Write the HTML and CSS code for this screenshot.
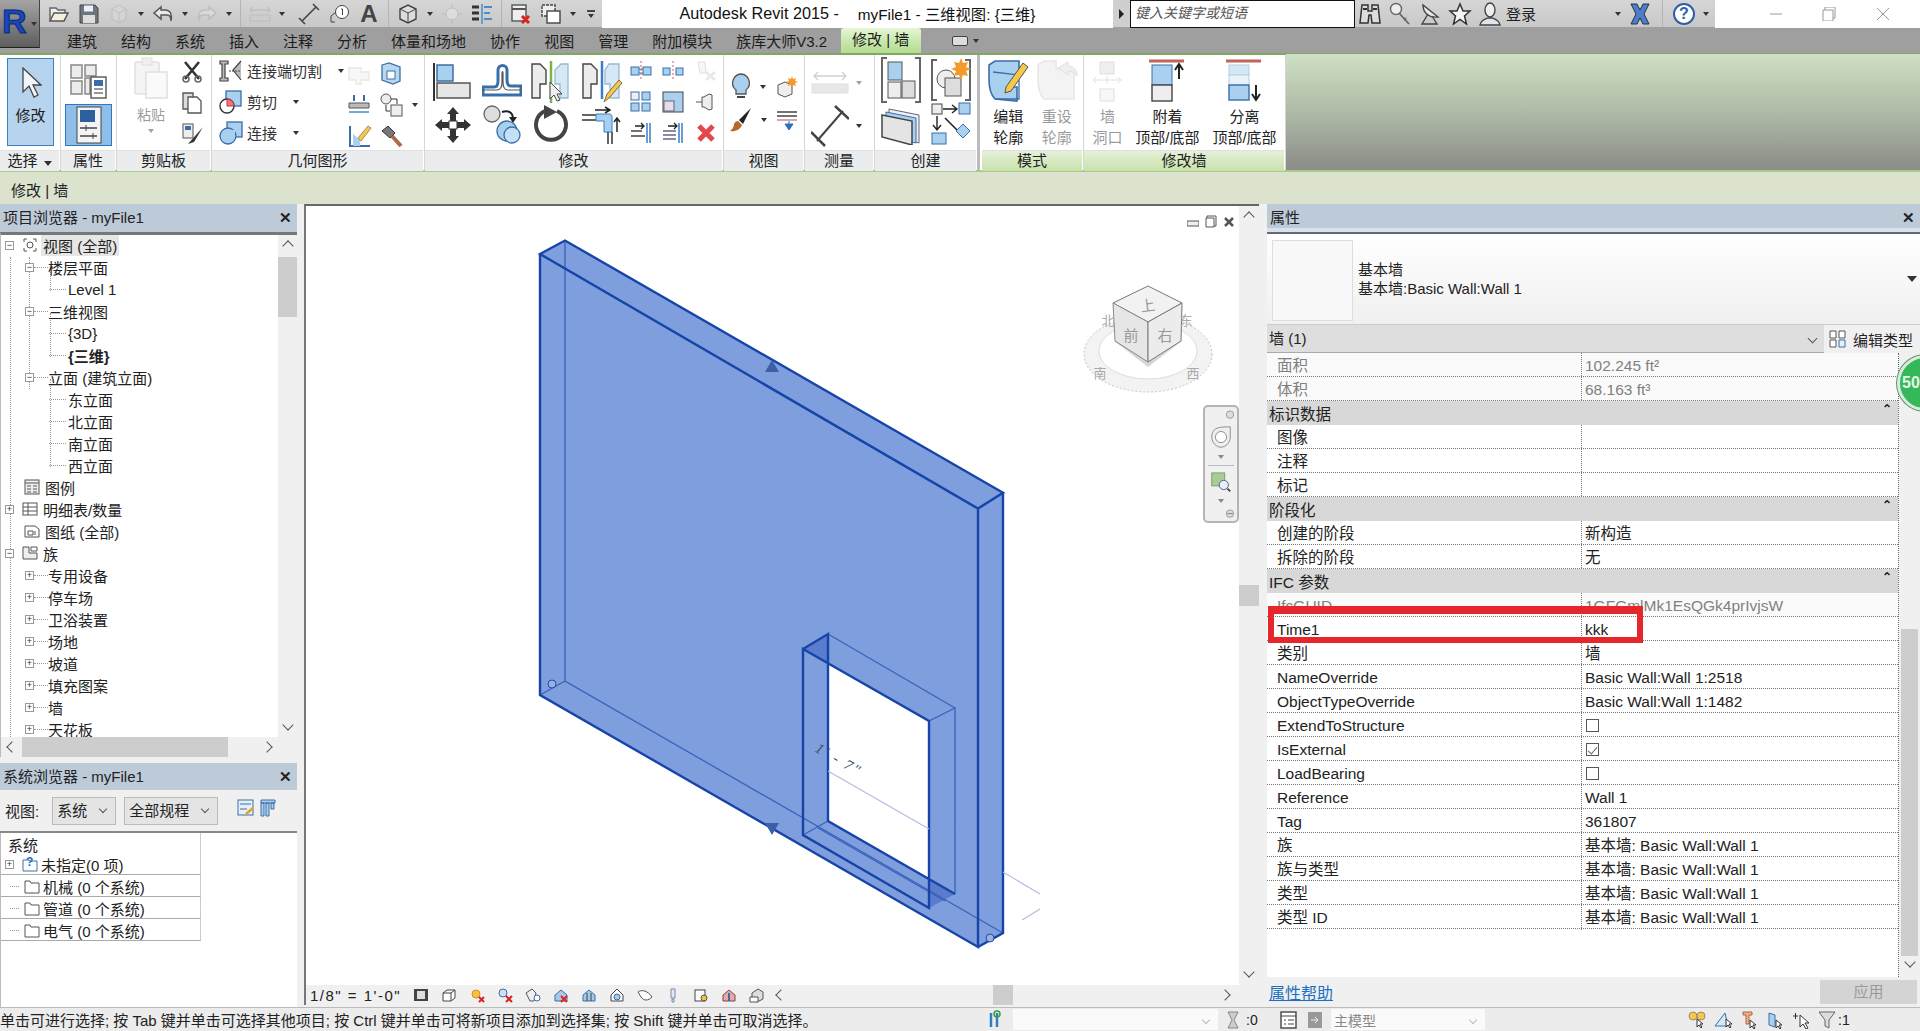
FILE: index.html
```html
<!DOCTYPE html>
<html lang="zh">
<head>
    <meta charset="UTF-8">
    <title>Autodesk Revit 2015 - myFile1</title>
    <link rel="stylesheet" href="styles.css">
</head>
<body>
    <!-- title bar -->
    <div class="titlebar">
        <div class="appbtn"><span class="applogo">R</span><i class="arr"></i></div>
        <div class="qat">
            <span class="s"><svg width="22" height="20" viewBox="0 0 22 20"><path d="M2 17V4h6l2 2h7v3" fill="#eee" stroke="#666" stroke-width="1.5"/><path d="M2 17l4-8h14l-4 8z" fill="#f4f0dd" stroke="#555" stroke-width="1.5"/></svg></span>
            <span class="s"><svg width="20" height="20" viewBox="0 0 20 20"><path d="M1 1h15l3 3v15H1z" fill="#6d7680" stroke="#444"/><rect x="5" y="1.5" width="9" height="6" fill="#eef"/><rect x="4" y="11" width="12" height="8" fill="#ddd"/></svg></span>
            <span class="s off"><svg width="22" height="22" viewBox="0 0 22 22"><path d="M4 6l7-4 7 4v10l-7 4-7-4z" fill="#ddd" stroke="#aaa"/><path d="M4 6l7 4 7-4M11 10v10" fill="none" stroke="#aaa"/></svg></span>
            <i class="a"><b class="arr"></b></i>
            <span class="s"><svg width="22" height="18" viewBox="0 0 22 18"><path d="M9 2L2 8l7 6v-4h6c3 0 4 2 4 6 1-6 0-11-6-11H9z" fill="#e8e8e8" stroke="#555" stroke-width="1.5"/></svg></span>
            <i class="a"><b class="arr"></b></i>
            <span class="s off"><svg width="22" height="18" viewBox="0 0 22 18"><path d="M13 2l7 6-7 6v-4H7c-3 0-4 2-4 6-1-6 0-11 6-11h4z" fill="#e8e8e8" stroke="#aaa" stroke-width="1.5"/></svg></span>
            <i class="a"><b class="arr"></b></i>
            <i class="qsep"></i>
            <span class="s off"><svg width="22" height="16" viewBox="0 0 22 16"><path d="M1 4h20M4 1L1 4l3 3M18 1l3 3-3 3" fill="none" stroke="#999"/><rect x="1" y="9" width="20" height="6" fill="#ccc" stroke="#aaa"/></svg></span>
            <i class="a"><b class="arr"></b></i>
            <span class="s sp"><svg width="22" height="22" viewBox="0 0 22 22"><path d="M4 18L18 4M1 15l6 6M15 1l6 6" fill="none" stroke="#444" stroke-width="1.6"/></svg></span>
            <span class="s"><svg width="22" height="20" viewBox="0 0 22 20"><circle cx="14" cy="8" r="6.5" fill="#fff" stroke="#444"/><path d="M13 5h1.5v6M3 12v6h4M3 12l5-4" fill="none" stroke="#444"/></svg></span>
            <span class="s qat-a">A</span>
            <i class="qsep"></i>
            <span class="s"><svg width="22" height="22" viewBox="0 0 22 22"><path d="M3 6l8-4 8 4v10l-8 4-8-4z" fill="#ddd" stroke="#444" stroke-width="1.4"/><path d="M3 6l8 4 8-4M11 10v10" fill="none" stroke="#444"/></svg></span>
            <i class="a"><b class="arr"></b></i>
            <span class="s off"><svg width="22" height="20" viewBox="0 0 22 20"><circle cx="11" cy="10" r="6" fill="#eee" stroke="#aaa"/><path d="M11 0v4M11 16v4M1 10h4M17 10h4" stroke="#aaa"/></svg></span>
            <span class="s"><svg width="22" height="20" viewBox="0 0 22 20"><path d="M1 3h7M1 9h7M1 15h7" stroke="#333" stroke-width="3"/><path d="M11 0v20" stroke="#4a8cc8" stroke-width="1.5"/><path d="M13 3h8M13 9h6M13 15h8" stroke="#4a8cc8" stroke-width="2"/></svg></span>
            <i class="qsep"></i>
            <span class="s"><svg width="22" height="22" viewBox="0 0 22 22"><rect x="2" y="2" width="14" height="16" fill="#eee" stroke="#555" stroke-width="1.4"/><path d="M2 6h14" stroke="#555" stroke-width="2"/><path d="M12 13l7 7M19 13l-7 7" stroke="#d22" stroke-width="3"/></svg></span>
            <span class="s"><svg width="22" height="22" viewBox="0 0 22 22"><rect x="2" y="2" width="13" height="11" fill="#eee" stroke="#444" stroke-width="1.4" stroke-dasharray="3 1"/><rect x="7" y="8" width="13" height="12" fill="#fff" stroke="#444" stroke-width="1.4"/></svg></span>
            <i class="a"><b class="arr"></b></i>
            <i class="a qat-more"><b class="bar"></b><b class="arr"></b></i>
        </div>
        <div class="apptitle"><span>Autodesk Revit 2015 -</span><span class="docname">myFile1 - 三维视图: {三维}</span></div>
        <div class="search-arrow"><i class="arr-r"></i></div>
        <div class="search">键入关键字或短语</div>
        <div class="qat qat-right">
            <span class="s"><svg width="24" height="24" viewBox="0 0 24 24"><path d="M4 3h6v6h4V3h6l2 18h-8l-1-8h-2l-1 8H2z" fill="#ddd" stroke="#333" stroke-width="1.5"/><path d="M5 7h4M15 7h4" stroke="#333" stroke-width="2"/></svg></span>
            <span class="s"><svg width="24" height="24" viewBox="0 0 24 24"><circle cx="8" cy="7" r="5.5" fill="#eee" stroke="#666" stroke-width="1.4"/><path d="M11 11l10 11M16 18l2-2" fill="none" stroke="#666" stroke-width="1.8"/></svg></span>
            <span class="s"><svg width="24" height="24" viewBox="0 0 24 24"><path d="M5 3c0 9 7 13 15 12L5 3z" fill="#e8e8e8" stroke="#444" stroke-width="1.4"/><path d="M10 12l-6 10h15l-5-8" fill="none" stroke="#444" stroke-width="1.4"/></svg></span>
            <span class="s"><svg width="24" height="24" viewBox="0 0 24 24"><path d="M12 2l3 7h7l-5.5 5 2 8-6.5-4.500L5.500 22l2-8L2 9h7z" fill="#f4f4f4" stroke="#333" stroke-width="1.5"/></svg></span>
            <span class="s"><svg width="24" height="24" viewBox="0 0 24 24"><ellipse cx="12" cy="8" rx="5" ry="7" fill="#eee" stroke="#444" stroke-width="1.4"/><path d="M2 23c1-5 5-6 8-7h4c3 1 7 2 8 7z" fill="#dde6ef" stroke="#444" stroke-width="1.4"/></svg></span>
            <span class="login">登录</span>
            <i class="a login-arr"><b class="arr"></b></i>
            <span class="s"><svg width="24" height="24" viewBox="0 0 24 24"><path d="M3 2h6l3 6 3-6h6l-5 10 5 10h-6l-3-6-3 6H3l5-10z" fill="#4f7cc8" stroke="#234" stroke-width="1"/></svg></span>
            <i class="qsep qsep-wide"></i>
            <span class="s"><svg width="24" height="24" viewBox="0 0 24 24"><circle cx="12" cy="12" r="10" fill="#fff" stroke="#2f5fa8" stroke-width="2"/></svg><em class="help">?</em></span>
            <i class="a"><b class="arr"></b></i>
        </div>
        <div class="winbtns">
            <svg width="14" height="14" viewBox="0 0 14 14"><path d="M1 7h12" stroke="#999"/></svg>
            <svg width="14" height="14" viewBox="0 0 14 14"><path d="M1 3h10v11H1zM3 3V0h10v11h-2" fill="none" stroke="#999"/></svg>
            <svg width="14" height="14" viewBox="0 0 14 14"><path d="M1 1l12 12M13 1L1 13" stroke="#999"/></svg>
        </div>
    </div>

    <!-- tabs -->
    <div class="tabs">
        <span>建筑</span><span>结构</span><span>系统</span><span>插入</span><span>注释</span><span>分析</span><span>体量和场地</span><span>协作</span><span>视图</span><span>管理</span><span>附加模块</span><span>族库大师V3.2</span>
        <span class="tab-active">修改 | 墙</span>
        <span class="tab-toggle"><b class="tt-box"></b><b class="arr"></b></span>
    </div>

    <!-- ribbon -->
    <div class="ribbon">
        <div class="panel p-select">
            <div class="pbody">
                <div class="modify-btn">
                    <svg width="22" height="32" viewBox="0 0 22 32"><path d="M3 1v24l6-6 5 11 4-2-5-10h8z" fill="#f2f6fa" stroke="#444" stroke-width="1.3"/></svg>
                    <span>修改</span>
                </div>
            </div>
            <div class="plabel">选择 <i class="arr"></i></div>
        </div>
        <div class="panel p-props">
            <div class="pbody col-center">
                <svg class="top-ic" width="40" height="38" viewBox="0 0 40 38"><path d="M2 4h11v13H2zM2 20h11v13H2zM16 4h11v11H16zM16 17h5v16h-5z" fill="#ececec" stroke="#888" stroke-width="1.5"/><rect x="22" y="16" width="15" height="21" fill="#fff" stroke="#555" stroke-width="1.4"/><rect x="25" y="19" width="9" height="6" fill="#3a6ea8"/><path d="M25 28h9M25 32h9" stroke="#777" stroke-width="1.5"/></svg>
                <div class="sel-btn"><svg width="26" height="38" viewBox="0 0 26 38"><rect x="1" y="1" width="24" height="36" fill="#f4f4f4" stroke="#444"/><rect x="4" y="4" width="15" height="12" fill="#2e5f9e"/><path d="M4 22h17M4 30h17" stroke="#444" stroke-width="1.5"/><path d="M10 19v6M17 27v6" stroke="#444"/></svg></div>
            </div>
            <div class="plabel">属性</div>
        </div>
        <div class="panel p-clip">
            <div class="pbody clip-body">
                <div class="big off">
                    <svg width="36" height="42" viewBox="0 0 36 42"><rect x="2" y="5" width="24" height="32" rx="2" fill="#e8e8e8" stroke="#bbb" stroke-width="1.5"/><rect x="9" y="1" width="10" height="7" fill="#ddd" stroke="#bbb"/><path d="M13 15h21v26H13z" fill="#f4f4f4" stroke="#bbb" stroke-width="1.5"/></svg>
                    <span>粘贴</span><i class="arr"></i>
                </div>
                <div class="small-col">
                    <svg width="20" height="22" viewBox="0 0 20 22"><path d="M3 1l14 17M17 1L3 18" stroke="#333" stroke-width="2.5"/><circle cx="4" cy="18" r="3" fill="none" stroke="#666" stroke-width="1.5"/><circle cx="16" cy="18" r="3" fill="none" stroke="#666" stroke-width="1.5"/></svg>
                    <svg width="20" height="22" viewBox="0 0 20 22"><path d="M1 1h10v16H1z" fill="#ddd" stroke="#555" stroke-width="1.3"/><path d="M6 5h9l4 4v12H6z" fill="#fff" stroke="#555" stroke-width="1.3"/></svg>
                    <svg width="22" height="22" viewBox="0 0 22 22"><rect x="1" y="1" width="10" height="14" fill="#eee" stroke="#555"/><rect x="3" y="3" width="6" height="4" fill="#3a6ea8"/><path d="M21 4L6 21l6-2z" fill="#333"/></svg>
                </div>
            </div>
            <div class="plabel">剪贴板</div>
        </div>
        <div class="panel p-geom">
            <div class="pbody geom-body">
                <div class="geom-rows">
                    <div class="grow"><svg width="24" height="22" viewBox="0 0 24 22"><path d="M1 1h8v3H6v14h3v3H1v-3h2V4H1zM22 1l-8 9 8 10" fill="#bbb" stroke="#444" stroke-width="1.2"/><path d="M10 11h12" stroke="#444" stroke-width="1.2" stroke-dasharray="2 1"/></svg><span>连接端切割</span><i class="arr"></i></div>
                    <div class="grow"><svg width="24" height="24" viewBox="0 0 24 24"><rect x="7" y="1" width="15" height="15" fill="#a9d0ee" stroke="#3b6ea8" stroke-width="1.3"/><circle cx="8" cy="16" r="7" fill="#fff" stroke="#333" stroke-width="1.4"/><path d="M8 9a7 7 0 0 1 7 7H8z" fill="#e78" stroke="#c33"/></svg><span>剪切</span><i class="arr"></i></div>
                    <div class="grow"><svg width="24" height="24" viewBox="0 0 24 24"><rect x="8" y="1" width="15" height="15" fill="#a9d0ee" stroke="#3b6ea8" stroke-width="1.3"/><circle cx="9" cy="15" r="8" fill="#a9d0ee" stroke="#3b6ea8" stroke-width="1.3"/><path d="M9 9h7v7H9z" fill="#a9d0ee"/></svg><span>连接</span><i class="arr"></i></div>
                </div>
                <div class="geom-icons">
                    <svg class="off" width="22" height="22" viewBox="0 0 22 22"><path d="M1 5h12v4h8v8h-8v4H8v-4H1z" fill="#eee" stroke="#ccc" stroke-width="1.3"/></svg>
                    <svg width="22" height="24" viewBox="0 0 22 24"><path d="M2 3l7-2 11 4v14l-7 3-11-4z" fill="#b8d8f0" stroke="#3b6ea8" stroke-width="1.3"/><rect x="7" y="9" width="8" height="8" fill="#fff" stroke="#3b6ea8"/></svg>
                    <svg width="22" height="22" viewBox="0 0 22 22"><path d="M1 9h20v5H1z" fill="#bbb" stroke="#555"/><path d="M1 18h20" stroke="#4a8cc8" stroke-width="1.5"/><path d="M6 1v6M16 1v6" stroke="#3b6ea8" stroke-width="2"/></svg>
                    <span class="with-arr"><svg width="24" height="24" viewBox="0 0 24 24"><circle cx="6" cy="6" r="5" fill="#eee" stroke="#555"/><rect x="11" y="12" width="11" height="11" fill="#eee" stroke="#555"/><path d="M11 6h6v5M6 12v6h4" fill="none" stroke="#333"/></svg><i class="arr"></i></span>
                    <svg width="24" height="24" viewBox="0 0 24 24"><path d="M2 2v20h20" fill="none" stroke="#3b6ea8" stroke-width="2"/><path d="M5 22V10l7 6V22z" fill="#a9d0ee"/><path d="M10 14L20 2l3 2-10 13z" fill="#f4c84a" stroke="#a86"/></svg>
                    <svg width="24" height="24" viewBox="0 0 24 24"><path d="M2 7l6-5 7 7-5 5z" fill="#777" stroke="#333"/><path d="M12 12l9 10" stroke="#b06a4a" stroke-width="4"/></svg>
                </div>
            </div>
            <div class="plabel">几何图形</div>
        </div>
        <div class="panel p-modify">
            <div class="pbody modify-body">
                <div class="large-grid">
                    <svg width="40" height="40" viewBox="0 0 40 40"><path d="M1 1v38" stroke="#333" stroke-width="2"/><rect x="4" y="3" width="16" height="16" fill="#a9d0ee" stroke="#3b6ea8" stroke-width="1.5"/><rect x="4" y="21" width="33" height="15" fill="#e6e6e6" stroke="#555" stroke-width="1.5"/></svg>
                    <svg width="40" height="38" viewBox="0 0 40 38"><path d="M1 32V24h11c3 0 4-2 4-6V7c0-6 9-6 9 0v10c0 4 1 6 4 6h10v9z" fill="#fff" stroke="#3b6ea8" stroke-width="3"/><path d="M1 27h14c4 0 5-3 5-8v-9c0-2 1-2 1 0v9c0 5 1 8 5 8h13" fill="none" stroke="#555" stroke-width="1.2"/></svg>
                    <svg width="40" height="42" viewBox="0 0 40 42"><path d="M1 3h8l6 6v14H9v14H1z" fill="#ececec" stroke="#444" stroke-width="1.4"/><path d="M20 0v42" stroke="#7fb24a" stroke-width="2.5"/><path d="M37 3h-7l-6 6v14h5v14h8z" fill="#d5e8f6" stroke="#9bc" stroke-width="1.3"/><path d="M19 21v17l4-4 3 6 3-1-3-6h5z" fill="#eee" stroke="#444"/></svg>
                    <svg width="40" height="42" viewBox="0 0 40 42"><path d="M1 3h8l6 6v14H9v14H1z" fill="#ececec" stroke="#444" stroke-width="1.4"/><path d="M20 0v38" stroke="#3b7fc8" stroke-width="2.5"/><path d="M37 3h-10l-4 6v14h5v14h9z" fill="#d5e8f6" stroke="#9bc" stroke-width="1.3"/><path d="M22 41l3-8 12-14 3 3-12 14z" fill="#f4c84a" stroke="#864"/></svg>
                    <svg width="38" height="38" viewBox="0 0 38 38"><path d="M19 1l6 7h-3v8h8v-3l7 6-7 6v-3h-8v8h3l-6 7-6-7h3v-8H8v3l-7-6 7-6v3h8V8h-3z" fill="#333"/><rect x="15" y="15" width="8" height="8" fill="#fff" stroke="#333"/></svg>
                    <svg width="38" height="40" viewBox="0 0 38 40"><circle cx="9" cy="9" r="8" fill="#ddd" stroke="#666" stroke-width="1.3"/><path d="M19 7c6-2 11 0 11 7" fill="none" stroke="#222" stroke-width="2"/><path d="M26 12h8l-4 6z" fill="#222"/><circle cx="24" cy="26" r="10" fill="#a9d0ee" stroke="#3b6ea8" stroke-width="1.3"/><circle cx="29" cy="30" r="8" fill="#c4e0f4" stroke="#3b6ea8" stroke-width="1.3"/></svg>
                    <svg width="38" height="40" viewBox="0 0 38 40"><path d="M13 6a15 15 0 1 0 12 0" fill="none" stroke="#444" stroke-width="4"/><path d="M12 0l13 7-13 7z" fill="#444"/></svg>
                    <svg width="42" height="38" viewBox="0 0 42 38"><path d="M1 9h14M1 14h14" stroke="#333" stroke-width="1.5"/><path d="M14 4h14M24 1l5 3-5 3" fill="none" stroke="#222" stroke-width="1.5"/><path d="M15 8h13c2 0 3 1 3 3v15h-8V15h-8z" fill="#a9d0ee" stroke="#3b7fc8"/><path d="M27 26v12M31 26v12" stroke="#333" stroke-width="1.5"/><path d="M36 26V12M33 16l3-4 3 4" fill="none" stroke="#222" stroke-width="1.5"/></svg>
                </div>
                <div class="small-grid">
                    <svg width="22" height="22" viewBox="0 0 22 22"><rect x="1" y="7" width="8" height="8" fill="#a9d0ee" stroke="#3b6ea8"/><rect x="13" y="7" width="8" height="8" fill="#a9d0ee" stroke="#3b6ea8"/><path d="M9 9h4M9 13h4" stroke="#3b6ea8"/><path d="M11 1v20" stroke="#d55" stroke-dasharray="2 2"/></svg>
                    <svg width="22" height="22" viewBox="0 0 22 22"><rect x="1" y="8" width="7" height="7" fill="#a9d0ee" stroke="#3b6ea8"/><rect x="14" y="8" width="7" height="7" fill="#a9d0ee" stroke="#3b6ea8"/><path d="M11 1v20" stroke="#d55" stroke-dasharray="2 2"/></svg>
                    <svg class="off" width="22" height="22" viewBox="0 0 22 22"><path d="M3 2h7l1 11H5z" fill="#eee" stroke="#bbb"/><path d="M11 12l9 8M20 12l-9 8" stroke="#ccc" stroke-width="2.5"/></svg>
                    <svg width="22" height="22" viewBox="0 0 22 22"><rect x="1" y="1" width="8" height="8" fill="#eee" stroke="#3b6ea8"/><rect x="12" y="1" width="8" height="8" fill="#a9d0ee" stroke="#3b6ea8"/><rect x="1" y="12" width="8" height="8" fill="#a9d0ee" stroke="#3b6ea8"/><rect x="12" y="12" width="8" height="8" fill="#a9d0ee" stroke="#3b6ea8"/></svg>
                    <svg width="22" height="22" viewBox="0 0 22 22"><rect x="1" y="1" width="20" height="20" fill="#a9d0ee" stroke="#444"/><rect x="2" y="10" width="10" height="10" fill="#e6dcef" stroke="#666"/></svg>
                    <svg width="22" height="22" viewBox="0 0 22 22"><path d="M1 11h6M7 6h2l5-3 3 1v14l-3 1-5-3H7z" fill="#eee" stroke="#555"/></svg>
                    <svg width="22" height="22" viewBox="0 0 22 22"><path d="M1 9h11M1 14h14" stroke="#444" stroke-width="1.5"/><path d="M5 4h9M11 1l3 3-3 3" fill="none" stroke="#222" stroke-width="1.3"/><path d="M17 1v20M20 1v20" stroke="#3b7fc8" stroke-width="1.5"/></svg>
                    <svg width="22" height="22" viewBox="0 0 22 22"><path d="M1 9h13M1 13h13M1 17h13" stroke="#668" stroke-width="1.5"/><path d="M6 4h9M12 1l3 3-3 3" fill="none" stroke="#222" stroke-width="1.3"/><path d="M17 1v20M20 1v20" stroke="#3b7fc8" stroke-width="1.5"/></svg>
                    <svg width="22" height="22" viewBox="0 0 22 22"><path d="M4 4l14 14M18 4L4 18" stroke="#e4474a" stroke-width="5"/></svg>
                </div>
            </div>
            <div class="plabel">修改</div>
        </div>
        <div class="panel p-view">
            <div class="pbody two-grid">
                <span class="with-arr"><svg width="22" height="28" viewBox="0 0 22 28"><path d="M11 1a9 9 0 0 1 5 16v4H6v-4a9 9 0 0 1 5-16z" fill="#a9d0ee" stroke="#555" stroke-width="1.3"/><path d="M7 24h8" stroke="#444" stroke-width="2"/></svg><i class="arr"></i></span>
                <svg width="22" height="24" viewBox="0 0 22 24"><path d="M2 10l7-3 7 3v9l-7 3-7-3z" fill="#eee" stroke="#555"/><path d="M16 1l1 3 3-1-1 3 3 1-3 1 1 3-3-1-1 3-1-3-3 1 1-3-3-1 3-1-1-3 3 1z" fill="#f39a2a"/></svg>
                <span class="with-arr"><svg width="24" height="26" viewBox="0 0 24 26"><path d="M22 1L10 13l4 4z" fill="#222"/><path d="M9 14l4 4c-2 5-7 7-12 6 3-2 4-5 4-7 1-2 2-3 4-3z" fill="#b26a2f"/></svg><i class="arr"></i></span>
                <svg width="22" height="22" viewBox="0 0 22 22"><path d="M1 3h20M1 7h20" stroke="#444" stroke-width="1.5"/><path d="M1 11h20" stroke="#a55"/><path d="M13 12v6M9 15l4 6 4-6z" fill="#2f6fc0" stroke="#2f6fc0"/></svg>
            </div>
            <div class="plabel">视图</div>
        </div>
        <div class="panel p-measure">
            <div class="pbody measure-body">
                <span class="with-arr off"><svg width="38" height="26" viewBox="0 0 38 26"><path d="M3 6h32M7 2L3 6l4 4M31 2l4 4-4 4" fill="none" stroke="#999" stroke-width="1.3"/><rect x="1" y="14" width="36" height="9" fill="#ccc" stroke="#bbb"/></svg><i class="arr"></i></span>
                <span class="with-arr"><svg width="38" height="42" viewBox="0 0 38 42"><path d="M6 36L32 6" stroke="#444" stroke-width="2"/><path d="M0 27l14 14M24 1l14 13" stroke="#444" stroke-width="2.5"/></svg><i class="arr"></i></span>
            </div>
            <div class="plabel">测量</div>
        </div>
        <div class="panel p-create">
            <div class="pbody two-grid create-grid">
                <svg width="40" height="46" viewBox="0 0 40 46"><path d="M6 1H1v44h5M34 1h5v44h-5" fill="none" stroke="#666" stroke-width="2"/><rect x="7" y="5" width="14" height="18" fill="#a9d0ee" stroke="#555"/><rect x="7" y="25" width="13" height="16" fill="#eee" stroke="#555"/><rect x="21" y="24" width="13" height="17" fill="#ddd" stroke="#555"/></svg>
                <svg width="40" height="46" viewBox="0 0 40 46"><path d="M6 3H1v40h5M34 3h5v40h-5" fill="none" stroke="#666" stroke-width="2"/><circle cx="15" cy="22" r="9" fill="#eee" stroke="#555"/><rect x="14" y="21" width="16" height="18" fill="#ddd" stroke="#555"/><path d="M30 1l2 5 5-1-2 5 5 2-5 2 2 5-5-1-2 5-2-5-5 1 2-5-5-2 5-2-2-5 5 1z" fill="#f39a2a"/></svg>
                <svg width="40" height="44" viewBox="0 0 40 44"><path d="M8 8l30 6v28L8 34z" fill="#eef" stroke="#666"/><path d="M5 11l30 6v25L5 36z" fill="#a9d0ee" stroke="#3b6ea8"/><path d="M1 14l30 6v24L1 36z" fill="#e4e4e4" stroke="#444" stroke-width="1.5"/></svg>
                <svg width="40" height="44" viewBox="0 0 40 44"><rect x="1" y="3" width="10" height="10" fill="#eee" stroke="#444"/><path d="M12 8h13M21 4l5 4-5 4" fill="none" stroke="#222" stroke-width="1.4"/><rect x="28" y="2" width="11" height="11" fill="#a9d0ee" stroke="#3b6ea8"/><path d="M6 15v13M2 24l4 5 4-5" fill="none" stroke="#222" stroke-width="1.4"/><path d="M14 17l12 12" stroke="#222" stroke-width="1.6"/><rect x="1" y="32" width="14" height="11" fill="#a9d0ee" stroke="#3b6ea8"/><path d="M32 23l7 7-7 7-7-7z" fill="#a9d0ee" stroke="#3b6ea8"/></svg>
            </div>
            <div class="plabel">创建</div>
        </div>
        <div class="panel p-mode green">
            <div class="pbody tool-row">
                <div class="tool">
                    <svg width="42" height="44" viewBox="0 0 42 44"><path d="M2 6l6-4h24v10L22 28l8 0v14L8 40C4 36 2 30 2 20z" fill="#a9d0ee" stroke="#3b6ea8" stroke-width="1.6"/><path d="M6 13l26 3v24H8" fill="none" stroke="#3b6ea8" stroke-width="1.3"/><path d="M19 28l-1 6 6-2 17-24-5-4z" fill="#f4c84a" stroke="#555"/></svg>
                    <span>编辑<br>轮廓</span>
                </div>
                <div class="tool off">
                    <svg width="42" height="44" viewBox="0 0 42 44"><path d="M2 6l6-4h12v8h18v30H8C4 36 2 30 2 20z" fill="#e6e6e6" stroke="#ccc" stroke-width="1.6"/><path d="M22 9l10-6v4c6 0 9 4 9 10-2-3-5-5-9-5v4z" fill="#ddd" stroke="#bbb"/></svg>
                    <span>重设<br>轮廓</span>
                </div>
            </div>
            <div class="plabel">模式</div>
        </div>
        <div class="panel p-wallmod green">
            <div class="pbody tool-row">
                <div class="tool off">
                    <svg width="30" height="44" viewBox="0 0 30 44"><rect x="8" y="3" width="14" height="12" fill="#ddd" stroke="#bbb"/><rect x="8" y="30" width="14" height="12" fill="#eee" stroke="#bbb"/><path d="M1 21h28M15 17v8M4 18l-3 3 3 3M26 18l3 3-3 3" fill="none" stroke="#bbb"/></svg>
                    <span>墙<br>洞口</span>
                </div>
                <div class="tool">
                    <svg width="36" height="44" viewBox="0 0 36 44"><path d="M0 2h35" stroke="#c0655a" stroke-width="3"/><rect x="3" y="6" width="20" height="20" fill="#a9d0ee" stroke="#3b6ea8"/><rect x="3" y="26" width="20" height="16" fill="#eee" stroke="#444" stroke-width="1.4"/><path d="M30 20V6M26 11l4-6 4 6" fill="none" stroke="#222" stroke-width="2"/></svg>
                    <span>附着<br>顶部/底部</span>
                </div>
                <div class="tool">
                    <svg width="36" height="44" viewBox="0 0 36 44"><path d="M0 2h35" stroke="#c0655a" stroke-width="3"/><rect x="3" y="6" width="20" height="10" fill="#d5e8f6" stroke="#bcd"/><rect x="3" y="16" width="20" height="10" fill="#e8f2fa" stroke="#bcd"/><rect x="3" y="26" width="20" height="15" fill="#a9d0ee" stroke="#3b6ea8" stroke-width="1.4"/><path d="M30 26v14M26 35l4 6 4-6" fill="none" stroke="#222" stroke-width="2"/></svg>
                    <span>分离<br>顶部/底部</span>
                </div>
            </div>
            <div class="plabel">修改墙</div>
        </div>
        <div class="ribbon-fill"></div>
    </div>

    <div class="contextbar">修改 | 墙</div>

    <div class="main">
        <!-- left column -->
        <div class="leftcol">
            <div class="dockhead">项目浏览器 - myFile1<b class="x">✕</b></div>
            <div class="browser">
                <div class="browser-inner">
                    <div class="tree">
                        <i class="guide g0"></i><i class="guide g1"></i><i class="guide g2"></i><i class="guide g3"></i><i class="guide g4"></i>
                        <div class="node d0"><i class="exp">−</i><svg class="nic" width="16" height="16" viewBox="0 0 16 16"><path d="M5 2H2v3M11 2h3v3M5 14H2v-3M11 14h3v-3" fill="none" stroke="#555"/><circle cx="8" cy="8" r="3" fill="none" stroke="#555"/></svg><span class="sel">视图 (全部)</span></div>
                        <div class="node d1"><i class="exp">−</i><i class="stub"></i>楼层平面</div>
                        <div class="node d2"><i class="stub"></i>Level 1</div>
                        <div class="node d1"><i class="exp">−</i><i class="stub"></i>三维视图</div>
                        <div class="node d2"><i class="stub"></i>{3D}</div>
                        <div class="node d2 bold"><i class="stub"></i>{三维}</div>
                        <div class="node d1"><i class="exp">−</i><i class="stub"></i>立面 (建筑立面)</div>
                        <div class="node d2"><i class="stub"></i>东立面</div>
                        <div class="node d2"><i class="stub"></i>北立面</div>
                        <div class="node d2"><i class="stub"></i>南立面</div>
                        <div class="node d2"><i class="stub"></i>西立面</div>
                        <div class="node d0 noexp"><svg class="nic" width="16" height="16" viewBox="0 0 16 16"><rect x="1" y="1" width="14" height="14" fill="#eee" stroke="#555"/><path d="M1 4h14M3 7h4M9 7h4M3 10h4M9 10h4M3 13h4M9 13h4" stroke="#555"/></svg>图例</div>
                        <div class="node d0"><i class="exp">+</i><svg class="nic" width="16" height="16" viewBox="0 0 16 16"><rect x="1" y="2" width="14" height="12" fill="#fff" stroke="#555"/><path d="M1 6h14M1 10h14M6 2v12" stroke="#555"/></svg>明细表/数量</div>
                        <div class="node d0 noexp"><svg class="nic" width="16" height="16" viewBox="0 0 16 16"><path d="M1 3h10l4 3v8H1z" fill="#fff" stroke="#555"/><path d="M4 8h5v4H4zM11 8v4" fill="none" stroke="#555"/></svg>图纸 (全部)</div>
                        <div class="node d0"><i class="exp">−</i><svg class="nic" width="16" height="16" viewBox="0 0 16 16"><path d="M1 2h6v6h8v6H1z" fill="#eee" stroke="#555"/><path d="M9 2h6v4H9z" fill="#fff" stroke="#555"/></svg>族</div>
                        <div class="node d1"><i class="exp">+</i><i class="stub"></i>专用设备</div>
                        <div class="node d1"><i class="exp">+</i><i class="stub"></i>停车场</div>
                        <div class="node d1"><i class="exp">+</i><i class="stub"></i>卫浴装置</div>
                        <div class="node d1"><i class="exp">+</i><i class="stub"></i>场地</div>
                        <div class="node d1"><i class="exp">+</i><i class="stub"></i>坡道</div>
                        <div class="node d1"><i class="exp">+</i><i class="stub"></i>填充图案</div>
                        <div class="node d1"><i class="exp">+</i><i class="stub"></i>墙</div>
                        <div class="node d1"><i class="exp">+</i><i class="stub"></i>天花板</div>
                    </div>
                    <div class="vscroll tree-scroll"><i class="ch up"></i><b class="thumb"></b><i class="ch down"></i></div>
                </div>
                <div class="hscroll"><i class="ch left"></i><b class="thumb"></b><i class="ch right"></i></div>
            </div>
            <div class="dockhead second">系统浏览器 - myFile1<b class="x">✕</b></div>
            <div class="sys-tools">
                <span>视图:</span>
                <div class="combo c1">系统<i class="ch down"></i></div>
                <div class="combo c2">全部规程<i class="ch down"></i></div>
                <svg width="18" height="18" viewBox="0 0 18 18"><rect x="1" y="1" width="15" height="15" fill="#e6f0fa" stroke="#3b6ea8"/><path d="M3 5h11M3 10h7" stroke="#3b6ea8"/><path d="M9 15l7-6" stroke="#e6a030" stroke-width="2.5"/></svg>
                <svg width="18" height="18" viewBox="0 0 18 18"><path d="M1 1h14v3H1zM1 4v13h3V4zM6 4v13h3V4zM11 4v6h3V4z" fill="#a9d0ee" stroke="#3b6ea8"/></svg>
            </div>
            <div class="systree">
                <div class="sysrow head">系统</div>
                <div class="sysrow"><i class="exp">+</i><svg class="nic" width="16" height="16" viewBox="0 0 16 16"><path d="M1 3h6l1 1h7v10H1z" fill="#fff" stroke="#3b6ea8"/></svg><em class="q">?</em>未指定(0 项)</div>
                <div class="sysrow line"><i class="stub0"></i><svg class="nic" width="16" height="16" viewBox="0 0 16 16"><path d="M1 2h5l1 2h8v10H1z" fill="#fff" stroke="#555"/></svg>机械 (0 个系统)</div>
                <div class="sysrow line"><i class="stub0"></i><svg class="nic" width="16" height="16" viewBox="0 0 16 16"><path d="M1 2h5l1 2h8v10H1z" fill="#fff" stroke="#555"/></svg>管道 (0 个系统)</div>
                <div class="sysrow line"><i class="stub0"></i><svg class="nic" width="16" height="16" viewBox="0 0 16 16"><path d="M1 2h5l1 2h8v10H1z" fill="#fff" stroke="#555"/></svg>电气 (0 个系统)</div>
            </div>
        </div>

        <!-- 3d view -->
        <div class="viewcol">
            <div class="viewtop">
                <div class="canvas">
                    <svg class="scene" width="955" height="780" viewBox="306 207 955 780">
                        <path class="wall" fill-rule="evenodd" d="M540 255L565 241.5L1003 493.7V934L978 948L540 696ZM828 665L929 722V880L828 822Z"/>
                        <path class="shade" d="M803 650L828 635V665ZM929 909L955 895L929 880Z"/>
                        <path class="thin" d="M565 241.5V682L1003 934M540 696L565 682M929 722L955 709V895M828 635L955 709M803 836L828 822"/>
                        <path class="thin" d="M803 836L929 909M818 829L945 902"/>
                        <path class="thick" d="M540 255L565 241.5L1003 493.7L978 509.5ZM540 255V696L978 948V509.5M978 948L1003 934V493.7"/>
                        <path class="thick" d="M803 650L929 722V909L803 836ZM803 650L828 635V822L955 895"/>
                        <path class="dim" d="M828 772L929 830M1003 873L1040 895M1022 921L1040 910"/>
                        <path class="grip" d="M772 361l-7 12h14zM772 836l-7-12h14z"/>
                        <ellipse class="ring" cx="552" cy="685" rx="4" ry="4"/>
                        <ellipse class="ring" cx="990" cy="939" rx="4" ry="4"/>
                        <text class="dimtext" transform="translate(814 752) rotate(30)">1' - 7"</text>
                        <!-- view cube -->
                        <ellipse class="cube-ring" cx="1148" cy="355" rx="64" ry="38"/>
                        <ellipse class="cube-inner" cx="1148" cy="352" rx="49" ry="28"/>
                        <path class="cube-shadow" d="M1114 342l34 26 34-26-34-10z"/>
                        <path class="cube-top" d="M1148 287L1182 304L1148 323L1113 304Z"/>
                        <path class="cube-left" d="M1113 304L1148 323V363L1115 342Z"/>
                        <path class="cube-right" d="M1182 304L1148 323V363L1181 342Z"/>
                        <text class="cube-txt" x="1148" y="312" transform="rotate(-8 1148 308)">上</text>
                        <text class="cube-txt" x="1131" y="342">前</text>
                        <text class="cube-txt" x="1165" y="342">右</text>
                        <text class="cube-txt small" x="1108" y="326">北</text>
                        <text class="cube-txt small" x="1186" y="326">东</text>
                        <text class="cube-txt small" x="1100" y="379">南</text>
                        <text class="cube-txt small" x="1193" y="379">西</text>
                    </svg>
                    <div class="winctl">
                        <svg width="12" height="12" viewBox="0 0 12 12"><rect x="0" y="5" width="12" height="5" fill="#eee" stroke="#555"/></svg>
                        <svg width="12" height="13" viewBox="0 0 12 13"><path d="M2 3V1h9v10H9M1 3h8v9H1z" fill="#fff" stroke="#555"/></svg>
                        <svg width="12" height="12" viewBox="0 0 12 12"><path d="M2 2l8 8M10 2l-8 8" stroke="#555" stroke-width="2.5"/></svg>
                    </div>
                    <div class="navbar">
                        <svg class="nav-close" width="10" height="10" viewBox="0 0 10 10"><circle cx="5" cy="5" r="4" fill="#ddd" stroke="#999"/></svg>
                        <svg width="24" height="26" viewBox="0 0 24 26"><path d="M5 5c3-3 12-3 17-3v11c0 6-5 11-10 11S2 19 2 13c0-3 1-6 3-8z" fill="#eee" stroke="#888"/><circle cx="12" cy="13" r="6" fill="#fff" stroke="#888"/></svg>
                        <i class="arr grey"></i>
                        <hr>
                        <svg width="22" height="22" viewBox="0 0 22 22"><rect x="1" y="1" width="14" height="14" fill="#a8cc94" stroke="#7a9a70"/><circle cx="14" cy="14" r="5" fill="#e6f0fa" stroke="#557"/><path d="M18 18l3 3" stroke="#444" stroke-width="2"/></svg>
                        <i class="arr grey"></i>
                        <svg class="nav-close" width="10" height="10" viewBox="0 0 10 10"><circle cx="5" cy="5" r="4" fill="#ddd" stroke="#999"/><path d="M2 5h6" stroke="#777"/></svg>
                    </div>
                </div>
                <div class="vscroll view-scroll"><i class="ch up"></i><b class="thumb"></b><i class="ch down"></i></div>
            </div>
            <div class="viewbar">
                <span class="scale">1/8" = 1'-0"</span>
                <div class="vbicons">
                    <svg width="16" height="16" viewBox="0 0 16 16"><rect x="1" y="2" width="14" height="12" fill="#444"/><rect x="4" y="4" width="8" height="8" fill="#ddd"/></svg>
                    <svg width="16" height="16" viewBox="0 0 16 16"><path d="M2 6l4-3h8v8l-4 3H2z" fill="#fff" stroke="#444"/><path d="M2 6h8v8M10 6l4-3" fill="none" stroke="#444"/></svg>
                    <svg width="16" height="16" viewBox="0 0 16 16"><circle cx="7" cy="7" r="4" fill="#f6c040" stroke="#d89020"/><path d="M10 10l5 5M15 10l-5 5" stroke="#d22" stroke-width="2"/></svg>
                    <svg width="16" height="16" viewBox="0 0 16 16"><circle cx="6" cy="6" r="4" fill="#cfe0f2" stroke="#3b6ea8"/><path d="M9 9l6 6M15 9l-6 6" stroke="#d22" stroke-width="2"/></svg>
                    <svg width="16" height="16" viewBox="0 0 16 16"><path d="M1 6l6-4 4 4-2 8H5z" fill="#eee" stroke="#555"/><circle cx="12" cy="11" r="3" fill="#fff" stroke="#3b6ea8"/></svg>
                    <svg width="16" height="16" viewBox="0 0 16 16"><path d="M2 8l6-5 6 5v6H2z" fill="#a9c8e8" stroke="#3b6ea8"/><path d="M8 9l6 6M14 9l-6 6" stroke="#d22" stroke-width="2"/></svg>
                    <svg width="16" height="16" viewBox="0 0 16 16"><path d="M2 8l6-5 6 5v6H2z" fill="#a9c8e8" stroke="#3b6ea8"/><path d="M6 6v8M10 6v8" stroke="#345"/></svg>
                    <svg width="16" height="16" viewBox="0 0 16 16"><path d="M2 8l6-6 6 6v6H2z" fill="#fff" stroke="#444"/><circle cx="8" cy="10" r="3" fill="#a9c8e8" stroke="#3b6ea8"/></svg>
                    <svg width="16" height="16" viewBox="0 0 16 16"><path d="M1 5c4-3 10-1 14 5-4 4-8 4-11 0z" fill="#fff" stroke="#555"/></svg>
                    <svg width="16" height="16" viewBox="0 0 16 16"><path d="M6 2h4v9H6zM7 12h2v3H7z" fill="#dde8f4" stroke="#7a8ca8"/></svg>
                    <svg width="16" height="16" viewBox="0 0 16 16"><rect x="2" y="3" width="10" height="11" fill="#fff" stroke="#444"/><circle cx="11" cy="11" r="3" fill="#f6c040" stroke="#555"/></svg>
                    <svg width="16" height="16" viewBox="0 0 16 16"><path d="M2 8l6-5 6 5v6H2z" fill="#e6a8a8" stroke="#844"/><path d="M8 6v8" stroke="#3b6ea8" stroke-width="2"/></svg>
                    <svg width="16" height="16" viewBox="0 0 16 16"><path d="M3 6l6-4 5 3v7l-6 3-5-3z" fill="#ddd" stroke="#555"/><path d="M1 10h8v5H1z" fill="#fff" stroke="#555"/></svg>
                </div>
                <div class="vb-scroll"><i class="ch left"></i><b class="thumb"></b><i class="ch right"></i></div>
            </div>
        </div>

        <!-- properties -->
        <div class="propcol">
            <div class="dockhead prophead">属性<b class="x">✕</b></div>
            <div class="typesel">
                <div class="thumbnail"></div>
                <div class="typename">基本墙<br>基本墙:Basic Wall:Wall 1</div>
                <i class="arr big-arr"></i>
            </div>
            <div class="instance">
                <div class="inst-combo">墙 (1)<i class="ch down"></i></div>
                <div class="edittype"><svg width="17" height="18" viewBox="0 0 17 18"><path d="M1 1h6v7H1zM10 1h6v7h-6zM1 10h6v7H1z" fill="#fff" stroke="#555"/><path d="M10 10h6v7h-6z" fill="#e6f0fa" stroke="#3b6ea8"/></svg>编辑类型</div>
            </div>
            <div class="propbody">
                <div class="proptable">
                    <div class="prow dis"><span>面积</span><span>102.245 ft²</span></div>
                    <div class="prow dis"><span>体积</span><span>68.163 ft³</span></div>
                    <div class="pgroup">标识数据<i class="dbl">⌃</i></div>
                    <div class="prow"><span>图像</span><span></span></div>
                    <div class="prow"><span>注释</span><span></span></div>
                    <div class="prow"><span>标记</span><span></span></div>
                    <div class="pgroup">阶段化<i class="dbl">⌃</i></div>
                    <div class="prow"><span>创建的阶段</span><span>新构造</span></div>
                    <div class="prow"><span>拆除的阶段</span><span>无</span></div>
                    <div class="pgroup">IFC 参数<i class="dbl">⌃</i></div>
                    <div class="prow dis"><span>IfcGUID</span><span>1GFGmlMk1EsQGk4prIvjsW</span></div>
                    <div class="prow"><span>Time1</span><span>kkk</span></div>
                    <div class="prow"><span>类别</span><span>墙</span></div>
                    <div class="prow"><span>NameOverride</span><span>Basic Wall:Wall 1:2518</span></div>
                    <div class="prow"><span>ObjectTypeOverride</span><span>Basic Wall:Wall 1:1482</span></div>
                    <div class="prow"><span>ExtendToStructure</span><span><i class="check"></i></span></div>
                    <div class="prow"><span>IsExternal</span><span><i class="check on"></i></span></div>
                    <div class="prow"><span>LoadBearing</span><span><i class="check"></i></span></div>
                    <div class="prow"><span>Reference</span><span>Wall 1</span></div>
                    <div class="prow"><span>Tag</span><span>361807</span></div>
                    <div class="prow"><span>族</span><span>基本墙: Basic Wall:Wall 1</span></div>
                    <div class="prow"><span>族与类型</span><span>基本墙: Basic Wall:Wall 1</span></div>
                    <div class="prow"><span>类型</span><span>基本墙: Basic Wall:Wall 1</span></div>
                    <div class="prow"><span>类型 ID</span><span>基本墙: Basic Wall:Wall 1</span></div>
                    <div class="redbox"></div>
                </div>
                <div class="vscroll prop-scroll"><b class="thumb"></b><i class="ch down"></i></div>
            </div>
            <div class="propfoot"><a>属性帮助</a><div class="apply">应用</div></div>
            <div class="badge"><span>50</span></div>
        </div>
    </div>

    <!-- status bar -->
    <div class="statusbar">
        <span class="status-text">单击可进行选择; 按 Tab 键并单击可选择其他项目; 按 Ctrl 键并单击可将新项目添加到选择集; 按 Shift 键并单击可取消选择。</span>
        <svg class="st1" width="16" height="20" viewBox="0 0 16 20"><path d="M5 3v14M11 3v14" stroke="#2f7fc0" stroke-width="2.5" fill="none"/><circle cx="11" cy="4" r="3" fill="none" stroke="#3a9a4a" stroke-width="1.5"/></svg>
        <div class="st-combo st-c1"><i class="ch down"></i></div>
        <svg class="st2" width="12" height="18" viewBox="0 0 12 18"><path d="M1 1h10L7 9l4 8H1l4-8z" fill="#ccc" stroke="#888"/></svg>
        <span class="st-count">:0</span>
        <svg class="st3" width="20" height="20" viewBox="0 0 20 20"><rect x="2" y="2" width="15" height="16" fill="#fff" stroke="#444" stroke-width="1.4"/><path d="M2 6h15M5 10h2M9 10h6M5 14h2M9 14h6" stroke="#444"/></svg>
        <svg class="st4" width="16" height="18" viewBox="0 0 16 18"><rect x="1" y="1" width="14" height="16" fill="#999"/><path d="M4 9h6M8 6l3 3-3 3" fill="none" stroke="#eee"/></svg>
        <div class="st-combo st-c2">主模型<i class="ch down"></i></div>
        <div class="st-icons">
            <svg width="18" height="18" viewBox="0 0 18 18"><circle cx="5" cy="5" r="4" fill="#f4c84a" stroke="#a86"/><circle cx="13" cy="5" r="4" fill="#f4c84a" stroke="#a86"/><path d="M9 8v8l2-2 2 3 1-1-2-3h3z" fill="#fff" stroke="#333"/></svg>
            <svg width="18" height="18" viewBox="0 0 18 18"><path d="M1 15L11 2l3 13z" fill="#d5e8f6" stroke="#3b6ea8"/><path d="M12 8v8l2-2 2 3 1-1-2-3h3z" fill="#fff" stroke="#333"/></svg>
            <svg width="18" height="18" viewBox="0 0 18 18"><path d="M3 1h9v3H9v9H6V4H3z" fill="#f4b080" stroke="#a64"/><path d="M10 9v8l2-2 2 3 1-1-2-3h3z" fill="#fff" stroke="#333"/></svg>
            <svg width="18" height="18" viewBox="0 0 18 18"><path d="M3 2l6 2v12l-6-2z" fill="#a9d0ee" stroke="#3b6ea8"/><path d="M10 9v8l2-2 2 3 1-1-2-3h3z" fill="#fff" stroke="#333"/></svg>
            <svg width="18" height="18" viewBox="0 0 18 18"><path d="M1 5h5M3.5 2v6" stroke="#333"/><path d="M8 4v12l3-3 3 5 2-1-3-5h4z" fill="#fff" stroke="#333"/></svg>
            <svg width="18" height="18" viewBox="0 0 18 18"><path d="M1 1h16l-6 8v8l-4-2V9z" fill="#ddd" stroke="#666"/></svg>
        </div>
        <span class="st-count1">:1</span>
    </div>
</body>
</html>
```

FILE: styles.css
```css
* {
    box-sizing: border-box;
}

html, body {
    margin: 0;
    height: 100%;
    overflow: hidden;
}

body {
    display: flex;
    flex-direction: column;
    width: 1920px;
    height: 1031px;
    background: #f0f0f0;
    color: #222;
    font-family: "Liberation Sans", "Noto Sans CJK SC", sans-serif;
    font-size: 15px;
    position: relative;
}

i, em {
    font-style: normal;
}

.off {
    opacity: 0.45;
}

/* little dropdown triangle */
.arr {
    display: inline-block;
    width: 0;
    height: 0;
    border-left: 3.5px solid transparent;
    border-right: 3.5px solid transparent;
    border-top: 4px solid #333;
}

.arr.grey {
    border-top-color: #888;
}

.arr-r {
    width: 0;
    height: 0;
    border-top: 5px solid transparent;
    border-bottom: 5px solid transparent;
    border-left: 5px solid #222;
}

/* chevrons */
.ch {
    display: block;
    width: 8px;
    height: 8px;
    border-right: 1.5px solid #555;
    border-bottom: 1.5px solid #555;
}

.ch.down { transform: rotate(45deg); }
.ch.up { transform: rotate(-135deg); }
.ch.left { transform: rotate(135deg); }
.ch.right { transform: rotate(-45deg); }

/* title bar */
.titlebar {
    height: 28px;
    display: flex;
    background: #fff;
    flex-shrink: 0;
}

.appbtn {
    position: absolute;
    left: 0;
    top: 0;
    width: 40px;
    height: 48px;
    background: linear-gradient(#a4a4a4, #5e5e5e);
    border-bottom: 1px solid #222;
    border-right: 1px solid #444;
    z-index: 5;
}

.applogo {
    position: absolute;
    left: 2px;
    top: 2px;
    font-size: 34px;
    line-height: 38px;
    font-weight: bold;
    color: #1946b8;
    -webkit-text-stroke: 1px #0c2a78;
}

.appbtn .arr {
    position: absolute;
    right: 2px;
    top: 22px;
}

.qat {
    width: 602px;
    padding-left: 44px;
    display: flex;
    align-items: center;
    background: linear-gradient(#d6d6d6, #c8c8c8);
    border-bottom: 1px solid #a0a0a0;
}

.s {
    flex: 0 0 30px;
    display: flex;
    justify-content: center;
    align-items: center;
    position: relative;
}

.a {
    flex: 0 0 14px;
    display: flex;
    flex-direction: column;
    align-items: center;
    gap: 2px;
}

.bar {
    width: 8px;
    height: 2px;
    background: #444;
}

.sp {
    margin-left: 5px;
}

.qat-more {
    margin-left: 4px;
}

.qat-a {
    font-size: 24px;
    font-weight: bold;
    color: #444;
}

.qsep {
    width: 1px;
    height: 100%;
    margin: 0 4px;
    background: #b4b4b4;
}

.apptitle {
    width: 511px;
    display: flex;
    justify-content: center;
    gap: 19px;
    padding-bottom: 2px;
    align-items: center;
    font-size: 16.2px;
    color: #111;
    white-space: nowrap;
}

.docname {
    font-size: 15.3px;
}

.search-arrow {
    width: 17px;
    display: flex;
    align-items: center;
    justify-content: center;
    background: #cfcfcf;
    border-bottom: 1px solid #a0a0a0;
}

.search {
    width: 225px;
    border: 1px solid #111;
    background: #fff;
    font-style: italic;
    color: #555;
    padding-left: 4px;
    font-size: 14px;
    line-height: 25px;
}

.qat-right {
    width: 360px;
    padding-left: 0;
}

.login {
    margin-left: 1px;
}

.login-arr {
    margin-left: auto;
}

.qsep-wide {
    margin: 0 6px 0 7px;
}

.help {
    position: absolute;
    font-size: 16px;
    font-weight: bold;
    color: #2f5fa8;
}

.qat-right .a:last-child {
    margin-right: 2px;
}

.winbtns {
    flex: 1;
    display: flex;
    justify-content: space-around;
    align-items: center;
    padding: 0 10px 0 34px;
}

/* tabs */
.tabs {
    height: 25px;
    display: flex;
    gap: 24px;
    align-items: center;
    padding-left: 67px;
    background: #9f9f9f;
    flex-shrink: 0;
    white-space: nowrap;
    color: #1c1c1c;
}

.tab-active {
    margin-left: -10px;
    padding: 0 11px;
    height: 25px;
    line-height: 24px;
    background: linear-gradient(#e6f5d6, #c4e6a6 60%, #b6dc92);
    border-radius: 3px 3px 0 0;
    width: 80px;
}

.tab-toggle {
    margin-left: 7px;
    display: flex;
    align-items: center;
    gap: 5px;
}

.tt-box {
    width: 16px;
    height: 10px;
    border-radius: 2px;
    background: #ddd;
    border: 1px solid #444;
}

/* ribbon */
.ribbon {
    height: 119px;
    display: flex;
    flex-shrink: 0;
    background: #fff;
    border-top: 2px solid #80a860;
    border-bottom: 2px solid #a8cc88;
}

.panel {
    display: flex;
    flex-direction: column;
    border-right: 1px solid #d6d6d6;
    flex-shrink: 0;
}

.pbody {
    height: 95px;
    flex-shrink: 0;
}

.plabel {
    flex: 1;
    margin-right: 1px;
    background: #ebeced;
    text-align: center;
    font-size: 15px;
    line-height: 20px;
    border-top: 1px solid #e0e0e0;
    white-space: nowrap;
}

.plabel .arr {
    border-left-width: 4.5px;
    border-right-width: 4.5px;
    border-top-width: 5px;
    margin-left: 2px;
}

.green .plabel {
    background: linear-gradient(#e4f0d8, #c9e2ac);
}

.p-select { width: 61px; }
.p-props { width: 56px; }
.p-clip { width: 95px; }
.p-geom { width: 213px; }
.p-modify { width: 299px; }
.p-view { width: 81px; }
.p-measure { width: 70px; }
.p-create { width: 105px; border-right: 3px solid #bbb; }
.p-mode { width: 102px; margin-left: 2px; }
.p-wallmod { width: 202px; }

.modify-btn {
    margin: 3px 0 0 7px;
    width: 47px;
    height: 88px;
    background: #b6d4ee;
    border: 1px solid #3d7fc0;
    display: flex;
    flex-direction: column;
    align-items: center;
    gap: 5px;
    padding-top: 8px;
}

.col-center {
    display: flex;
    flex-direction: column;
    align-items: center;
    padding-top: 6px;
    gap: 5px;
}

.sel-btn {
    width: 47px;
    height: 42px;
    background: #8fbfe8;
    border: 1px solid #2f78c0;
    display: flex;
    justify-content: center;
    align-items: center;
}

.clip-body {
    display: flex;
    padding: 2px 0 0 15px;
}

.big {
    width: 38px;
    display: flex;
    flex-direction: column;
    align-items: center;
    gap: 5px;
}

.big span {
    font-size: 14px;
    white-space: nowrap;
}

.small-col {
    margin-left: 12px;
    padding-top: 4px;
    display: flex;
    flex-direction: column;
    gap: 9px;
}

.geom-body {
    display: flex;
    padding: 3px 0 0 7px;
}

.geom-rows {
    width: 130px;
    display: flex;
    flex-direction: column;
    gap: 6px;
}

.grow {
    height: 25px;
    display: flex;
    align-items: center;
    gap: 4px;
    white-space: nowrap;
    color: #333;
}

.grow .arr {
    margin-left: 12px;
}

.geom-icons {
    display: grid;
    grid-template-columns: 32px 44px;
    grid-auto-rows: 31px;
    align-items: center;
    justify-items: start;
}

.with-arr {
    display: inline-flex;
    align-items: center;
    gap: 8px;
}

.modify-body {
    display: flex;
    padding: 5px 0 0 3px;
}

.large-grid {
    display: grid;
    grid-template-columns: 49px 49px 49px 54px;
    grid-auto-rows: 43px;
    align-items: center;
    justify-items: center;
    width: 203px;
    height: 88px;
}

.small-grid {
    display: grid;
    grid-template-columns: 32px 32px 34px;
    grid-auto-rows: 31px;
    align-items: center;
    justify-items: center;
    height: 93px;
    margin: -5px 0 0 -5px;
}

.two-grid {
    display: grid;
    grid-template-columns: 48px 30px;
    grid-auto-rows: 33px;
    align-items: center;
    justify-items: center;
    padding: 15px 0 0 0;
}

.measure-body {
    display: flex;
    flex-direction: column;
    align-items: flex-start;
    padding: 9px 0 0 6px;
    gap: 5px;
}

.measure-body .with-arr {
    gap: 7px;
    height: 38px;
}

.create-grid {
    grid-template-columns: 50px 50px;
    grid-auto-rows: 43px;
    padding: 3px 0 0 1px;
}

.tool-row {
    display: flex;
    justify-content: space-around;
    padding: 4px 2px 0;
}

.tool {
    display: flex;
    flex-direction: column;
    align-items: center;
    gap: 3px;
    text-align: center;
    font-size: 15px;
    line-height: 21px;
    white-space: nowrap;
}

.ribbon-fill {
    flex: 1;
    margin-top: -1px;
    background: linear-gradient(#cfe0c6, #aebaa6 50%, #8a8c88);
}

.contextbar {
    height: 32px;
    background: #dbe3cf;
    line-height: 37px;
    padding-left: 11px;
    flex-shrink: 0;
}

/* main area */
.main {
    flex: 1;
    display: flex;
    min-height: 0;
}

.leftcol {
    width: 297px;
    margin-right: 7px;
    display: flex;
    flex-direction: column;
    flex-shrink: 0;
}

.dockhead {
    height: 28px;
    flex-shrink: 0;
    background: #bdcbd9;
    padding-left: 3px;
    line-height: 27px;
    font-size: 15px;
    display: flex;
    justify-content: space-between;
}

.dockhead.second {
    height: 27px;
    margin-top: 6px;
}

.x {
    font-size: 15px;
    font-weight: bold;
    padding-right: 5px;
}

.browser {
    height: 525px;
    border-top: 3px solid #777;
    display: flex;
    flex-direction: column;
    flex-shrink: 0;
    background: #f0f0f0;
    border-left: 1px solid #bbb;
}

.browser-inner {
    flex: 1;
    display: flex;
    min-height: 0;
}

.tree {
    flex: 1;
    background: #fff;
    overflow: hidden;
    position: relative;
}

.guide {
    position: absolute;
    width: 1px;
    border-left: 1px dotted #999;
}

.g0 { left: 9px; top: 22px; height: 520px; }
.g1 { left: 28px; top: 22px; height: 132px; }
.g2 { left: 49px; top: 34px; height: 22px; }
.g3 { left: 49px; top: 78px; height: 44px; }
.g4 { left: 49px; top: 144px; height: 88px; }

.node {
    height: 22px;
    display: flex;
    align-items: center;
    white-space: nowrap;
    position: relative;
}

.tree .node:nth-child(6) {
    margin-top: -1px;
}

.node.d0 { padding-left: 4px; }
.node.d1 { padding-left: 24px; }
.node.d2 { padding-left: 48px; }
.node.noexp { padding-left: 15px; }
.bold { font-weight: bold; }

.exp {
    width: 9px;
    height: 9px;
    border: 1px solid #999;
    background: #fff;
    font-size: 9px;
    line-height: 7px;
    text-align: center;
    color: #333;
    flex-shrink: 0;
    position: relative;
}

.nic {
    margin: 0 5px 0 8px;
    flex-shrink: 0;
}

.stub {
    width: 14px;
    border-top: 1px dotted #999;
    flex-shrink: 0;
}

.d2 .stub {
    width: 17px;
    margin-right: 2px;
}

.sel {
    background: #e6e6e6;
    padding: 0 2px;
    margin-left: -2px;
}

.vscroll {
    background: #f0f0f0;
    display: flex;
    flex-direction: column;
    align-items: center;
    flex-shrink: 0;
}

.tree-scroll {
    width: 19px;
    padding-top: 7px;
}

.tree-scroll .thumb {
    width: 19px;
    height: 60px;
    margin-top: 7px;
    background: #cdcdcd;
}

.tree-scroll .down {
    margin-top: auto;
    margin-bottom: 8px;
}

.hscroll {
    height: 20px;
    display: flex;
    align-items: center;
    padding-left: 7px;
    flex-shrink: 0;
}

.hscroll .thumb {
    width: 206px;
    height: 20px;
    margin-left: 6px;
    background: #cdcdcd;
}

.hscroll .right {
    margin-left: 35px;
}

.sys-tools {
    height: 43px;
    display: flex;
    align-items: center;
    padding-left: 5px;
    border-bottom: 2px solid #888;
    flex-shrink: 0;
}

.sys-tools svg {
    margin-left: 5px;
    margin-bottom: 6px;
}

.combo {
    height: 28px;
    margin-right: 8px;
    background: #e4e4e4;
    border: 1px solid #bbb;
    padding-left: 4px;
    line-height: 26px;
    display: flex;
    justify-content: space-between;
    align-items: center;
    padding-right: 9px;
}

.combo .ch {
    width: 6px;
    height: 6px;
    margin-top: -3px;
}

.c1 { width: 64px; margin-left: 13px; }
.c2 { width: 94px; margin-right: 14px; }

.systree {
    flex: 1;
    background: #fff;
    border-left: 1px solid #bbb;
}

.sysrow {
    width: 200px;
    height: 22px;
    display: flex;
    align-items: center;
    padding: 2px 0 0 4px;
    border-right: 1px solid #ccc;
    border-bottom: 1px solid #aaa;
    white-space: nowrap;
    position: relative;
}

.sysrow .nic {
    margin-right: 3px;
}

.sysrow.head {
    padding-left: 7px;
    height: 20px;
    border-bottom: none;
}

.stub0 {
    width: 9px;
    flex-shrink: 0;
    border-top: 1px dotted #999;
    margin-left: 5px;
}

.stub0 + .nic {
    margin-left: 5px;
}

.q {
    position: absolute;
    left: 25px;
    top: 2px;
    font-size: 12px;
    font-weight: bold;
    color: #1d6fc0;
}

/* 3d view */
.viewcol {
    width: 955px;
    border-top: 2px solid #666;
    border-left: 2px solid #777;
    display: flex;
    flex-direction: column;
    flex-shrink: 0;
    margin-bottom: 2px;
    background: #fff;
}

.viewtop {
    flex: 1;
    display: flex;
    min-height: 0;
}

.canvas {
    flex: 1;
    position: relative;
    overflow: hidden;
    background: #fff;
}

.scene {
    display: block;
}

.wall { fill: #7f9edd; }
.shade { fill: #5b7ccc; }
.thin { fill: none; stroke: #3a62bc; stroke-width: 1.3; }
.thick { fill: none; stroke: #1644a8; stroke-width: 2.4; }
.dim { fill: none; stroke: #b4bcdf; stroke-width: 1.2; }
.grip { fill: #3d5fa8; }
.ring { fill: #9ab0e4; stroke: #2a4a98; }
.dimtext { font-size: 15px; fill: #456; font-style: italic; font-family: "Liberation Serif", serif; letter-spacing: 2px; }
.cube-ring { fill: #f3f3f3; stroke: #c4c4c4; stroke-dasharray: 2 2; }
.cube-inner { fill: #fff; stroke: #ddd; }
.cube-shadow { fill: #d6d6d6; }
.cube-top { fill: #f2f2f2; stroke: #777; }
.cube-left { fill: #e6e6e6; stroke: #888; }
.cube-right { fill: #ececec; stroke: #777; }
.cube-txt { font-size: 15px; fill: #999; text-anchor: middle; }
.cube-txt.small { font-size: 13px; fill: #aaa; }

.winctl {
    position: absolute;
    right: 2px;
    top: 9px;
    width: 50px;
    display: flex;
    justify-content: space-between;
    align-items: center;
    padding-right: 2px;
}

.navbar {
    position: absolute;
    left: 897px;
    top: 199px;
    width: 36px;
    height: 118px;
    background: #f0f0f0;
    border: 2px solid #b4b4b4;
    border-radius: 5px;
    display: flex;
    flex-direction: column;
    align-items: center;
    padding: 3px 0;
    gap: 6px;
}

.nav-close {
    align-self: flex-end;
    margin-right: 2px;
}

.navbar hr {
    width: 26px;
    margin: 0;
    border: 0;
    border-top: 1px solid #bbb;
}

.view-scroll {
    width: 20px;
    padding-top: 7px;
}

.view-scroll .thumb {
    width: 20px;
    height: 21px;
    margin-top: 364px;
    background: #cdcdcd;
}

.view-scroll .down {
    margin-top: auto;
    margin-bottom: 9px;
}

.viewbar {
    height: 20px;
    flex-shrink: 0;
    background: #f0f0f0;
    display: flex;
    align-items: center;
    padding-left: 4px;
    font-size: 14px;
}

.scale {
    width: 103px;
    white-space: nowrap;
    font-size: 15px;
    letter-spacing: 1.5px;
}

.vbicons {
    width: 364px;
    display: flex;
    gap: 12px;
    align-items: center;
}

.vb-scroll {
    flex: 1;
    display: flex;
    align-items: center;
}

.vb-scroll .thumb {
    width: 20px;
    height: 20px;
    margin-left: 208px;
    background: #cdcdcd;
}

.vb-scroll .right {
    margin-left: 208px;
}

/* properties */
.propcol {
    width: 653px;
    margin-left: 8px;
    flex-shrink: 0;
    display: flex;
    flex-direction: column;
    position: relative;
}

.prophead {
    height: 30px;
    border-bottom: 2px solid #667;
    box-shadow: inset 0 -4px 0 #d8e2ec;
}

.typesel {
    height: 91px;
    display: flex;
    align-items: center;
    background: linear-gradient(#fff, #f0f0f0);
    border-bottom: 1px solid #ccc;
    position: relative;
    flex-shrink: 0;
}

.thumbnail {
    margin: 2px 0 0 5px;
    width: 81px;
    height: 81px;
    background: #f8f8f8;
    border: 1px solid #ddd;
}

.typename {
    margin-left: 5px;
    line-height: 19px;
}

.big-arr {
    position: absolute;
    right: 3px;
    top: 42px;
    border-left-width: 5px;
    border-right-width: 5px;
    border-top-width: 6px;
}

.instance {
    height: 28px;
    display: flex;
    flex-shrink: 0;
    background: #f0f0f0;
}

.inst-combo {
    width: 557px;
    background: #dedede;
    border-bottom: 1px solid #aaa;
    padding-left: 2px;
    line-height: 29px;
    display: flex;
    justify-content: space-between;
    align-items: center;
    padding-right: 8px;
}

.inst-combo .ch {
    width: 7px;
    height: 7px;
}

.edittype {
    flex: 1;
    display: flex;
    align-items: center;
    gap: 7px;
    padding-left: 5px;
}

.propbody {
    flex: 1;
    display: flex;
    min-height: 0;
}

.proptable {
    width: 632px;
    position: relative;
    background: #fff;
    font-size: 15.5px;
    border-right: 1px dotted #666;
}

.prow {
    display: grid;
    grid-template-columns: 315px 1fr;
    height: 24px;
    border-bottom: 1px dotted #777;
    line-height: 25px;
    white-space: nowrap;
}

.prow span:first-child {
    padding-left: 10px;
    border-right: 1px dotted #777;
}

.prow span:last-child {
    padding-left: 3px;
}

.prow.dis {
    color: #808080;
    background: #fafafa;
}

.pgroup {
    height: 24px;
    background: #d8d8d8;
    padding-left: 2px;
    line-height: 27px;
    position: relative;
}

.dbl {
    position: absolute;
    right: 6px;
    top: 4px;
    font-size: 12px;
    line-height: 8px;
    font-weight: bold;
}

.check {
    display: inline-block;
    width: 13px;
    height: 13px;
    margin: 0 0 0 1px;
    border: 1px solid #555;
    background: #fff;
    vertical-align: -1px;
    position: relative;
}

.check.on::after {
    content: "";
    position: absolute;
    left: 3px;
    top: 1px;
    width: 4px;
    height: 8px;
    border-right: 1.5px solid #666;
    border-bottom: 1.5px solid #666;
    transform: rotate(40deg);
}

.redbox {
    position: absolute;
    left: 1px;
    top: 253px;
    width: 375px;
    height: 37px;
    border: 6px solid #e5272b;
    border-top-width: 8px;
}

.prop-scroll {
    flex: 1;
    padding-top: 276px;
    background: #f0f0f0;
}

.prop-scroll .thumb {
    width: 17px;
    height: 327px;
    background: #cdcdcd;
}

.prop-scroll .down {
    margin-top: 2px;
}

.propfoot {
    height: 30px;
    flex-shrink: 0;
    background: #f0f0f0;
    display: flex;
    justify-content: space-between;
    align-items: center;
    padding: 0 3px 0 2px;
}

.propfoot a {
    color: #1d6fc0;
    text-decoration: underline;
    font-size: 16px;
}

.apply {
    width: 97px;
    height: 24px;
    background: #d4d4d4;
    color: #999;
    text-align: center;
    line-height: 23px;
}

.badge {
    position: absolute;
    left: 630px;
    top: 151px;
    width: 56px;
    height: 56px;
    border-radius: 50%;
    background: #35b85a;
    border: 3px solid #dfe8df;
    box-shadow: 0 0 0 1px #4a9a5c;
    color: #e8f8e8;
    font-size: 16px;
    font-weight: bold;
    line-height: 50px;
    padding-left: 2px;
}

/* status bar */
.statusbar {
    height: 24px;
    flex-shrink: 0;
    display: flex;
    align-items: center;
    background: #ececec;
    border-top: 1px solid #bbb;
    font-size: 14px;
    white-space: nowrap;
    position: relative;
}

.status-text {
    width: 986px;
    overflow: hidden;
    font-size: 15px;
}

.st1 { margin: 0 11px 0 0; flex-shrink: 0; }

.st-combo {
    height: 21px;
    background: #fafafa;
    display: flex;
    align-items: center;
    justify-content: space-between;
    padding: 0 9px 0 3px;
    color: #888;
    flex-shrink: 0;
}

.st-combo .ch {
    width: 6px;
    height: 6px;
    border-color: #bbb;
    margin-left: auto;
}

.st-c1 { width: 205px; }
.st2 { margin: 0 0 0 9px; }
.st-count { margin-left: 7px; width: 30px; }
.st3 { margin-left: 3px; }
.st4 { margin-left: 8px; }
.st-c2 { width: 154px; margin-left: 8px; }

.st-icons {
    margin-left: 203px;
    display: flex;
    gap: 8px;
}

.st-count1 {
    margin-left: 2px;
}
```
